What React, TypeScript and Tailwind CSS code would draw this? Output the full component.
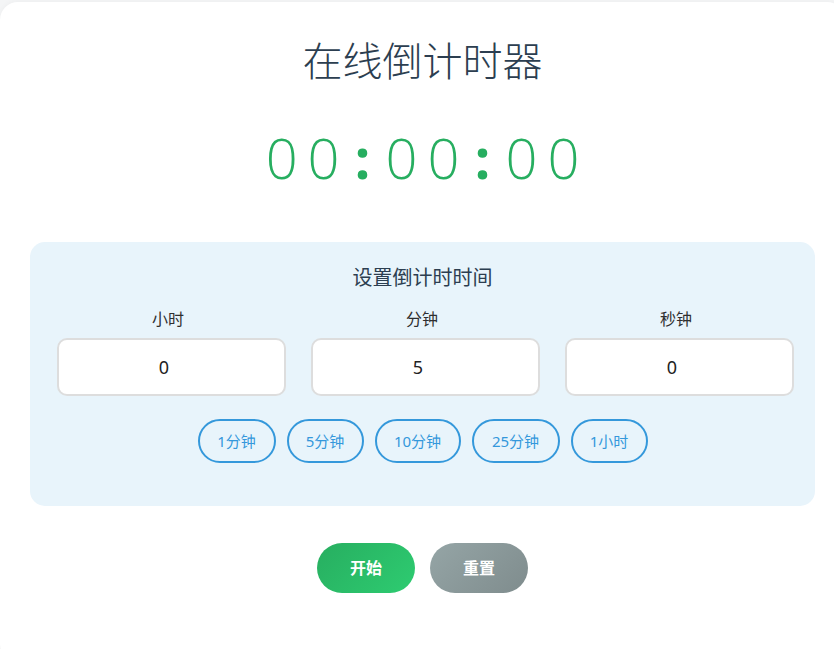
import React from "react";

const cjk = { fontFamily: '"Noto Sans", "Noto Sans CJK SC", sans-serif' };

const presets = [
  { label: "1分钟", w: "w-[78px]" },
  { label: "5分钟", w: "w-[77px]" },
  { label: "10分钟", w: "w-[86px]" },
  { label: "25分钟", w: "w-[88px]" },
  { label: "1小时", w: "w-[77px]" },
];

const fields = [
  { label: "小时", value: "0" },
  { label: "分钟", value: "5" },
  { label: "秒钟", value: "0" },
];

export default function App() {
  return (
    <div className="min-h-[649px] bg-[#f4f5f6] pt-[2px] overflow-hidden" style={cjk}>
      <div className="w-[845px] min-h-[660px] bg-white rounded-[18px] shadow-[0_0_6px_rgba(0,0,0,0.04)] pt-[35px]">
        <h1 className="text-center text-[40px] leading-[48px] font-light text-[#2c3e50]">
          在线倒计时器
        </h1>
        <div
          className="mt-[44px] flex justify-center text-[56px] leading-[56px] font-light text-[#27ae60] tracking-[10px]"
          style={{ fontFamily: '"Open Sans", "Noto Sans", sans-serif' }}
        >
          <span>00</span>
          <span className="mx-[5px] font-bold">:</span>
          <span>00</span>
          <span className="mx-[5px] font-bold">:</span>
          <span className="mr-[-10px]">00</span>
        </div>
        <div className="mt-[57px] mx-[30px] w-[785px] bg-[#e8f4fb] rounded-[15px] pt-[22px] pb-[43px] pl-[27px]">
          <h2 className="text-center pr-[27px] text-[20px] leading-[28px] text-[#2c3e50]">设置倒计时时间</h2>
          <div className="mt-[15px] grid grid-cols-[229px_229px_229px] gap-x-[25px]">
            {fields.map((f) => (
              <div key={f.label} className="flex flex-col">
                <label className="text-center pr-[7px] text-[16px] leading-[24px] text-[#2f2f2f]">{f.label}</label>
                <input
                  type="text"
                  defaultValue={f.value}
                  className="mt-[7px] h-[58px] w-[229px] border-2 border-[#dddddd] rounded-[10px] bg-white text-center pr-[15px] text-[18px] text-[#222] outline-none"
                  style={cjk}
                />
              </div>
            ))}
          </div>
          <div className="mt-[23px] pr-[27px] flex justify-center gap-[11px]">
            {presets.map((p) => (
              <button
                key={p.label}
                className={`${p.w} h-[44px] border-2 border-[#3498db] rounded-full text-[15px] text-[#3498db] bg-transparent flex items-center justify-center`}
              >
                {p.label}
              </button>
            ))}
          </div>
        </div>
        <div className="mt-[37px] flex justify-center gap-[15px]">
          <button className="w-[98px] h-[50px] rounded-full bg-linear-135 from-[#27ae60] to-[#2ecc71] text-white font-bold text-[16px]">
            开始
          </button>
          <button className="w-[98px] h-[50px] rounded-full bg-linear-135 from-[#95a5a6] to-[#7f8c8d] text-white font-bold text-[16px]">
            重置
          </button>
        </div>
      </div>
    </div>
  );
}
